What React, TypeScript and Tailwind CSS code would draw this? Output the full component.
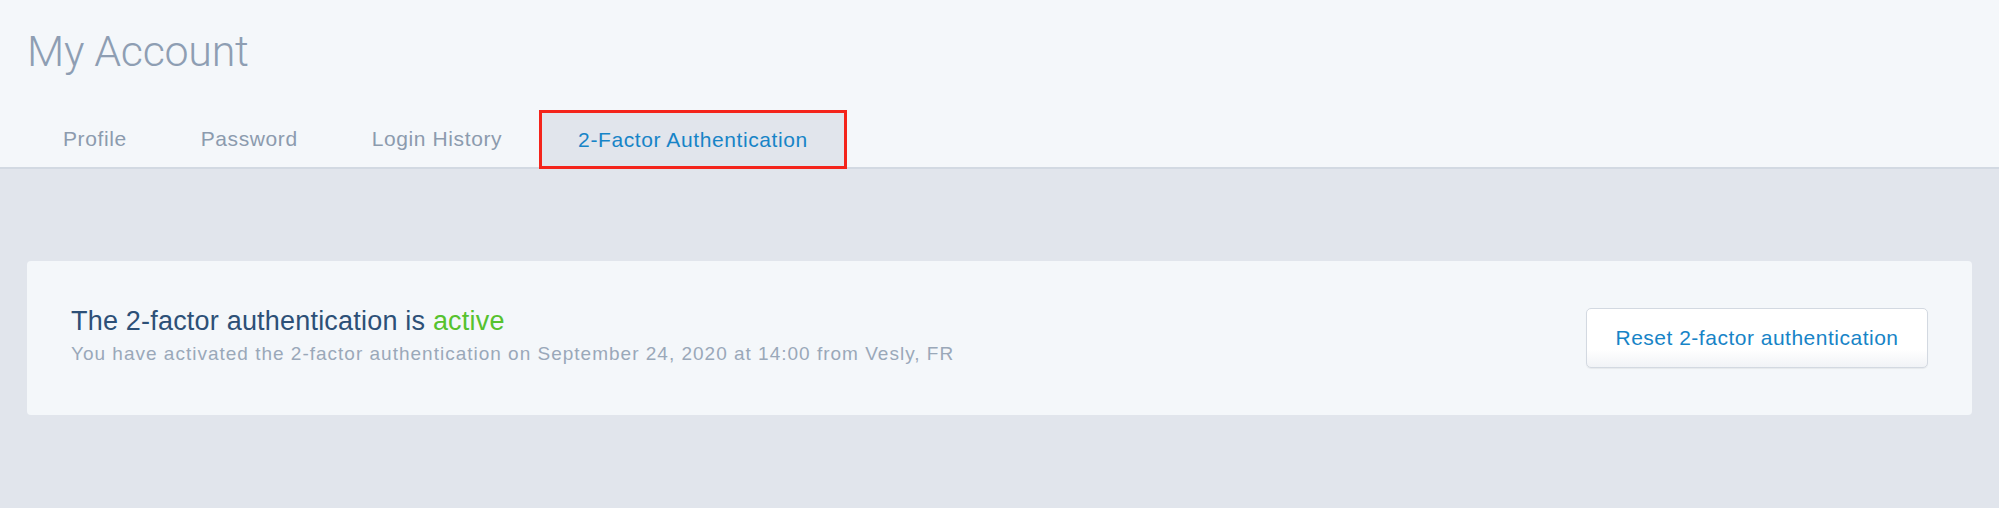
import React from "react";

const tabs = ["Profile", "Password", "Login History", "2-Factor Authentication"];

export default function App() {
  const active = "2-Factor Authentication";

  return (
    <div className="min-h-[508px] bg-[#e1e5ec] font-['Liberation_Sans',Arial,sans-serif]">
      <header className="bg-[#f4f7fa] border-b-2 border-[#d2d9e2] px-[27px]">
        <h1 className="pt-[30px] font-['Roboto','Liberation_Sans',sans-serif] text-[43px] leading-none font-light tracking-[-0.3px] text-[#8e9eb3]">
          My Account
        </h1>
        <nav className="mt-[37px] flex -ml-[1px]">
          {tabs.map((t) =>
            t === active ? (
              <button
                key={t}
                className="h-[59px] -mb-[2px] px-[36px] border-[3px] border-[#f4241b] bg-[#e1e5ec] text-[21px] tracking-[0.6px] text-[#1784c7]"
              >
                {t}
              </button>
            ) : (
              <button key={t} className="h-[57px] px-[37px] text-[21px] tracking-[0.6px] text-[#8c9bae]">
                {t}
              </button>
            )
          )}
        </nav>
      </header>

      <main className="px-[27px] pt-[92px] pb-[94px]">
        <div className="flex h-[154px] items-center justify-between rounded-[4px] bg-[#f4f7fa] px-[44px]">
          <div className="pb-[5px]">
            <h2 className="text-[27px] leading-[32px] tracking-[0.2px] text-[#2d5077]">
              The 2-factor authentication is <span className="text-[#56c22e]">active</span>
            </h2>
            <p className="mt-[5px] text-[19px] leading-[24px] tracking-[1px] text-[#9aa8b9]">
              You have activated the 2-factor authentication on September 24, 2020 at 14:00 from Vesly, FR
            </p>
          </div>
          <button className="h-[60px] w-[342px] rounded-[5px] border border-[#d3d9e1] bg-gradient-to-b from-white from-70% to-[#f1f3f6] text-[21px] tracking-[0.5px] text-[#1784c7] shadow-[0_1px_1px_rgba(0,0,0,0.06)]">
            Reset 2-factor authentication
          </button>
        </div>
      </main>
    </div>
  );
}
